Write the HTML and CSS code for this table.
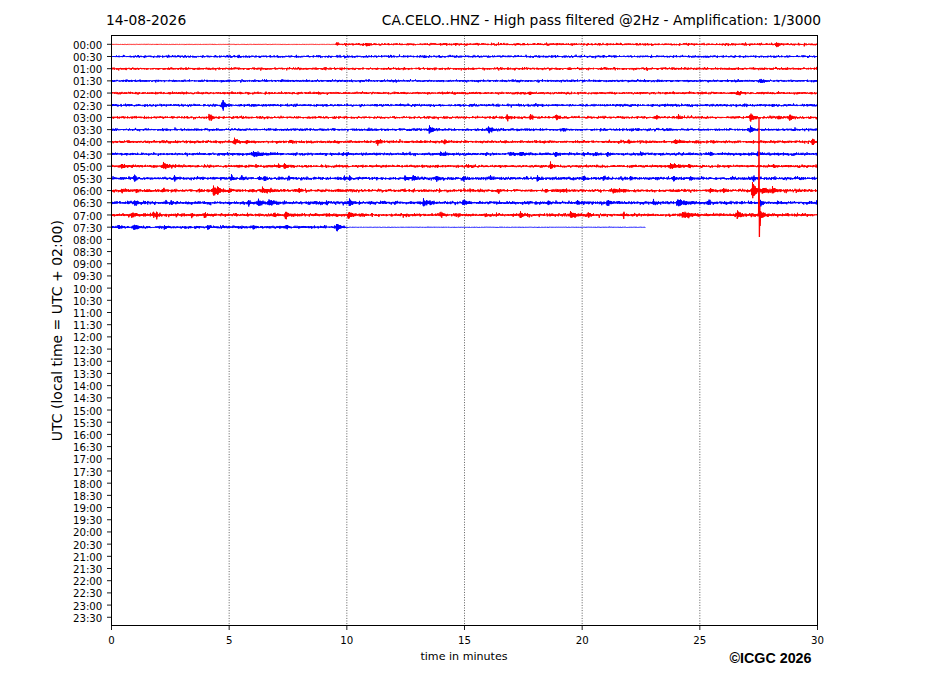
FILE: index.html
```html
<!DOCTYPE html>
<html lang="en">
<head>
<meta charset="utf-8">
<title>CA.CELO..HNZ helicorder</title>
<link rel="stylesheet" href="styles.css">
</head>
<body>
<div class="figure">
  <header class="titles">
    <span class="title">14-08-2026</span>
    <span class="title">CA.CELO..HNZ - High pass filtered @2Hz - Amplification: 1/3000</span>
  </header>
  <div class="main">
    <div class="ylabel-col"><span class="ylabel">UTC (local time = UTC + 02:00)</span></div>
    <svg class="plot" width="760" height="620" viewBox="0 0 760 620" xmlns="http://www.w3.org/2000/svg">
      <g class="grid">
        <line x1="164.17" y1="5.5" x2="164.17" y2="595.5"/>
        <line x1="281.83" y1="5.5" x2="281.83" y2="595.5"/>
        <line x1="399.5" y1="5.5" x2="399.5" y2="595.5"/>
        <line x1="517.17" y1="5.5" x2="517.17" y2="595.5"/>
        <line x1="634.83" y1="5.5" x2="634.83" y2="595.5"/>
      </g>
      <g id="traces"></g>
      <rect class="frame" x="46.5" y="5.5" width="706" height="590"/>
      <path class="ticks" d="M42 14.3H46.5M42 26.49H46.5M42 38.68H46.5M42 50.87H46.5M42 63.06H46.5M42 75.26H46.5M42 87.45H46.5M42 99.64H46.5M42 111.83H46.5M42 124.02H46.5M42 136.21H46.5M42 148.4H46.5M42 160.59H46.5M42 172.78H46.5M42 184.97H46.5M42 197.17H46.5M42 209.36H46.5M42 221.55H46.5M42 233.74H46.5M42 245.93H46.5M42 258.12H46.5M42 270.31H46.5M42 282.5H46.5M42 294.69H46.5M42 306.88H46.5M42 319.08H46.5M42 331.27H46.5M42 343.46H46.5M42 355.65H46.5M42 367.84H46.5M42 380.03H46.5M42 392.22H46.5M42 404.41H46.5M42 416.6H46.5M42 428.79H46.5M42 440.99H46.5M42 453.18H46.5M42 465.37H46.5M42 477.56H46.5M42 489.75H46.5M42 501.94H46.5M42 514.13H46.5M42 526.32H46.5M42 538.51H46.5M42 550.7H46.5M42 562.9H46.5M42 575.09H46.5M42 587.28H46.5M46.5 595.5V600M164.17 595.5V600M281.83 595.5V600M399.5 595.5V600M517.17 595.5V600M634.83 595.5V600M752.5 595.5V600"/>
      <g class="tick-label ytl">
        <text x="37.3" y="18.8">00:00</text>
        <text x="37.3" y="31.0">00:30</text>
        <text x="37.3" y="43.2">01:00</text>
        <text x="37.3" y="55.4">01:30</text>
        <text x="37.3" y="67.6">02:00</text>
        <text x="37.3" y="79.8">02:30</text>
        <text x="37.3" y="91.9">03:00</text>
        <text x="37.3" y="104.1">03:30</text>
        <text x="37.3" y="116.3">04:00</text>
        <text x="37.3" y="128.5">04:30</text>
        <text x="37.3" y="140.7">05:00</text>
        <text x="37.3" y="152.9">05:30</text>
        <text x="37.3" y="165.1">06:00</text>
        <text x="37.3" y="177.3">06:30</text>
        <text x="37.3" y="189.5">07:00</text>
        <text x="37.3" y="201.7">07:30</text>
        <text x="37.3" y="213.9">08:00</text>
        <text x="37.3" y="226.0">08:30</text>
        <text x="37.3" y="238.2">09:00</text>
        <text x="37.3" y="250.4">09:30</text>
        <text x="37.3" y="262.6">10:00</text>
        <text x="37.3" y="274.8">10:30</text>
        <text x="37.3" y="287.0">11:00</text>
        <text x="37.3" y="299.2">11:30</text>
        <text x="37.3" y="311.4">12:00</text>
        <text x="37.3" y="323.6">12:30</text>
        <text x="37.3" y="335.8">13:00</text>
        <text x="37.3" y="348.0">13:30</text>
        <text x="37.3" y="360.2">14:00</text>
        <text x="37.3" y="372.3">14:30</text>
        <text x="37.3" y="384.5">15:00</text>
        <text x="37.3" y="396.7">15:30</text>
        <text x="37.3" y="408.9">16:00</text>
        <text x="37.3" y="421.1">16:30</text>
        <text x="37.3" y="433.3">17:00</text>
        <text x="37.3" y="445.5">17:30</text>
        <text x="37.3" y="457.7">18:00</text>
        <text x="37.3" y="469.9">18:30</text>
        <text x="37.3" y="482.1">19:00</text>
        <text x="37.3" y="494.2">19:30</text>
        <text x="37.3" y="506.4">20:00</text>
        <text x="37.3" y="518.6">20:30</text>
        <text x="37.3" y="530.8">21:00</text>
        <text x="37.3" y="543.0">21:30</text>
        <text x="37.3" y="555.2">22:00</text>
        <text x="37.3" y="567.4">22:30</text>
        <text x="37.3" y="579.6">23:00</text>
        <text x="37.3" y="591.8">23:30</text>
      </g>
      <g class="tick-label xtl">
        <text x="46.5" y="614">0</text>
        <text x="164.17" y="614">5</text>
        <text x="281.83" y="614">10</text>
        <text x="399.5" y="614">15</text>
        <text x="517.17" y="614">20</text>
        <text x="634.83" y="614">25</text>
        <text x="752.5" y="614">30</text>
      </g>
    </svg>
  </div>
  <footer class="footer">
    <span class="xlabel">time in minutes</span>
    <span class="copyright">©ICGC 2026</span>
  </footer>
</div>
<script src="script.js"></script>
</body>
</html>
```

FILE: styles.css
```css
html, body {
  margin: 0;
  padding: 0;
  background: #ffffff;
}

body {
  font-family: "DejaVu Sans", sans-serif;
  color: #000;
}

.figure {
  width: 927px;
  height: 696px;
  overflow: hidden;
}

.titles {
  height: 30px;
  box-sizing: border-box;
  padding: 12px 106px 0 106px;
  display: flex;
  justify-content: space-between;
  align-items: flex-start;
}

.title {
  font-size: 13.8px;
  line-height: 16px;
  white-space: nowrap;
}

.main {
  display: flex;
  height: 620px;
}

.ylabel-col {
  width: 65px;
  flex: none;
  box-sizing: border-box;
  padding-bottom: 19px;
  display: flex;
  align-items: center;
  justify-content: flex-end;
}

.ylabel {
  writing-mode: vertical-rl;
  transform: rotate(180deg);
  font-size: 14px;
  line-height: 16px;
  white-space: nowrap;
}

.plot {
  display: block;
  flex: none;
}

.grid line {
  stroke: #333;
  stroke-width: 0.8;
  stroke-dasharray: 1 1.6;
}

.frame {
  fill: none;
  stroke: #000;
  stroke-width: 1;
}

.ticks {
  fill: none;
  stroke: #000;
  stroke-width: 0.9;
}

.tick-label {
  font-family: "DejaVu Sans", sans-serif;
  font-size: 10.2px;
  fill: #000;
}

.ytl {
  text-anchor: end;
}

.xtl {
  text-anchor: middle;
}

.trace {
  fill: none;
  stroke-width: 1;
  stroke-linejoin: miter;
}

.trace-red {
  stroke: #ff0000;
}

.trace-blue {
  stroke: #0000ff;
}

.spike {
  fill: none;
  stroke: #ff0000;
  stroke-width: 1.3;
}

.footer {
  display: grid;
  grid-template-columns: 111px 706px 1fr;
  height: 46px;
}

.xlabel {
  grid-area: 1 / 2;
  justify-self: center;
  font-size: 11.1px;
  line-height: 13px;
}

.copyright {
  grid-area: 1 / 2;
  justify-self: end;
  margin-right: 5.5px;
  font-family: "Liberation Sans", Arial, sans-serif;
  font-weight: bold;
  font-size: 14.3px;
  line-height: 16px;
}
```

FILE: script.js
```js
(function () {
  var NS = 'http://www.w3.org/2000/svg';
  var g = document.getElementById('traces');
  var seed = 20260814;
  function rnd() {
    seed |= 0; seed = (seed + 0x6D2B79F5) | 0;
    var t = Math.imul(seed ^ (seed >>> 15), 1 | seed);
    t = (t + Math.imul(t ^ (t >>> 7), 61 | t)) ^ t;
    return ((t ^ (t >>> 14)) >>> 0) / 4294967296;
  }
  function gauss() {
    var u = rnd() || 1e-9, v = rnd();
    return Math.sqrt(-2 * Math.log(u)) * Math.cos(2 * Math.PI * v);
  }

  // burst: [page x, half amplitude px, decay width px]
  var rows = [
    { s: 0.55, low: [111, 335], b: [[337,1,1],[366,2,1.5],[776,3,2]] },
    { s: 0.55, b: [] },
    { s: 0.55, b: [] },
    { s: 0.55, b: [[760,2.5,2]] },
    { s: 0.55, b: [[529,2.5,1.5],[737,2.5,2]] },
    { s: 0.6, b: [[222,6,2.5]] },
    { s: 0.6, b: [[209,5,2],[493,1.5,1],[507,3,1.5],[530,2.5,1.5],[556,3,1.5],[656,2.5,1.5],[678,2,1.5],[750,5,2.5],[778,2.5,1.5],[789,4,2]] },
    { s: 0.6, b: [[429,4.5,2.5],[488,3,4],[563,2,1.5],[750,4,2.5]] },
    { s: 0.65, b: [[234,3.5,2],[246,2.5,1.5],[290,2,1.5],[377,4,2],[444,2.5,1.5],[628,2,1.5],[675,2,5],[812,4,2]] },
    { s: 0.65, b: [[253,2.5,8],[346,2.5,1.5],[440,2,5],[510,2,3],[520,2,3],[555,3,2],[583,2,1.5],[595,2,2],[607,2.5,1.5],[640,2.5,1.5],[710,2,1.5],[757,3,2]] },
    { s: 0.65, b: [[121,2,5],[163,4,4],[278,2,1.5],[284,3.5,2],[550,4,2],[670,2.5,6],[688,2,1.5],[773,2,1.5]] },
    { s: 0.7, b: [[134,3,1.5],[174,3,1.5],[231,3,1.5],[241,2,1.5],[259,2.5,1.5],[264,3,1.5],[288,2,1.5],[344,2,1.5],[349,2.5,1.5],[404,2,6],[413,3,1.5],[436,3,2],[463,3,2],[490,2.5,1.5],[537,3,1.5],[583,3,1.5],[603,2.5,1.5],[630,2,2],[673,3,1.5],[690,2.5,1.5],[732,2,1.5],[753,3.5,2]] },
    { s: 0.7, b: [[121,2,3],[136,2,1.5],[163,2,1.5],[213,6,3],[217,4,2],[229,2,1.5],[262,2.5,8],[299,2,1.5],[498,2,1.5],[545,2,1.5],[562,2,1.5],[613,2.5,4],[623,2,2],[710,2,1.5],[723,2,1.5],[752,9,3],[762,4,3],[772,3.5,3]] },
    { s: 0.75, b: [[134,2.5,3],[171,2,1.5],[248,3,2],[258,3,3],[268,2.5,6],[326,2,1.5],[349,4,2],[423,3.5,2],[429,3,2],[463,3.5,3],[548,2,1.5],[577,3,1.5],[607,3.5,2],[653,2.5,2],[677,3.5,7],[708,3,1.5],[760,3,2]] },
    { s: 0.75, b: [[131,3,4],[153,3,1.5],[156,3,1.5],[191,2.5,1.5],[204,2.5,3],[274,2.5,1.5],[285,4,2],[348,4,3],[441,2.5,1.5],[520,4,2],[570,3,5],[588,2.5,1.5],[623,2.5,1.5],[682,3,8],[737,5,2.5],[760,3,4]] },
    { s: 0.65, low: [345, 700], end: 645, b: [[118,2,1.5],[133,3,4],[164,2,2],[208,2.5,1.5],[253,2,2],[286,2.5,2],[336,4,3]] }
  ];

  rows.forEach(function (r, i) {
    var yc = 14.3 + i * 12.191;
    var x0 = 46.5;
    var x1 = r.end ? r.end - 64.5 : 752.5;
    var parts = [];
    var sign = 1;
    for (var x = x0; x <= x1 + 0.001; x += 0.25) {
      var px = x + 64.5;
      var amp = r.s;
      if (r.low && px >= r.low[0] && px <= r.low[1]) amp = 0.12;
      sign = -sign;
      var y = sign * Math.abs(gauss()) * amp;
      for (var k = 0; k < r.b.length; k++) {
        var bb = r.b[k];
        var dx = px - bb[0];
        var e = dx >= 0 ? Math.exp(-dx / bb[2]) : Math.exp(dx / 0.6);
        if (e > 0.02) y += sign * bb[1] * e * (0.3 + 0.7 * rnd());
      }
      parts.push((parts.length ? 'L' : 'M') + x.toFixed(2) + ' ' + (yc + y).toFixed(2));
    }
    var p = document.createElementNS(NS, 'path');
    p.setAttribute('d', parts.join(''));
    p.setAttribute('class', 'trace ' + (i % 2 === 0 ? 'trace-red' : 'trace-blue'));
    g.appendChild(p);
  });

  var spike = document.createElementNS(NS, 'path');
  spike.setAttribute('d', 'M693.6 185L694 88L694.4 207L694.8 176L695.2 196L695.6 181L696 187L696.5 184');
  spike.setAttribute('class', 'spike');
  g.appendChild(spike);
})();
```
